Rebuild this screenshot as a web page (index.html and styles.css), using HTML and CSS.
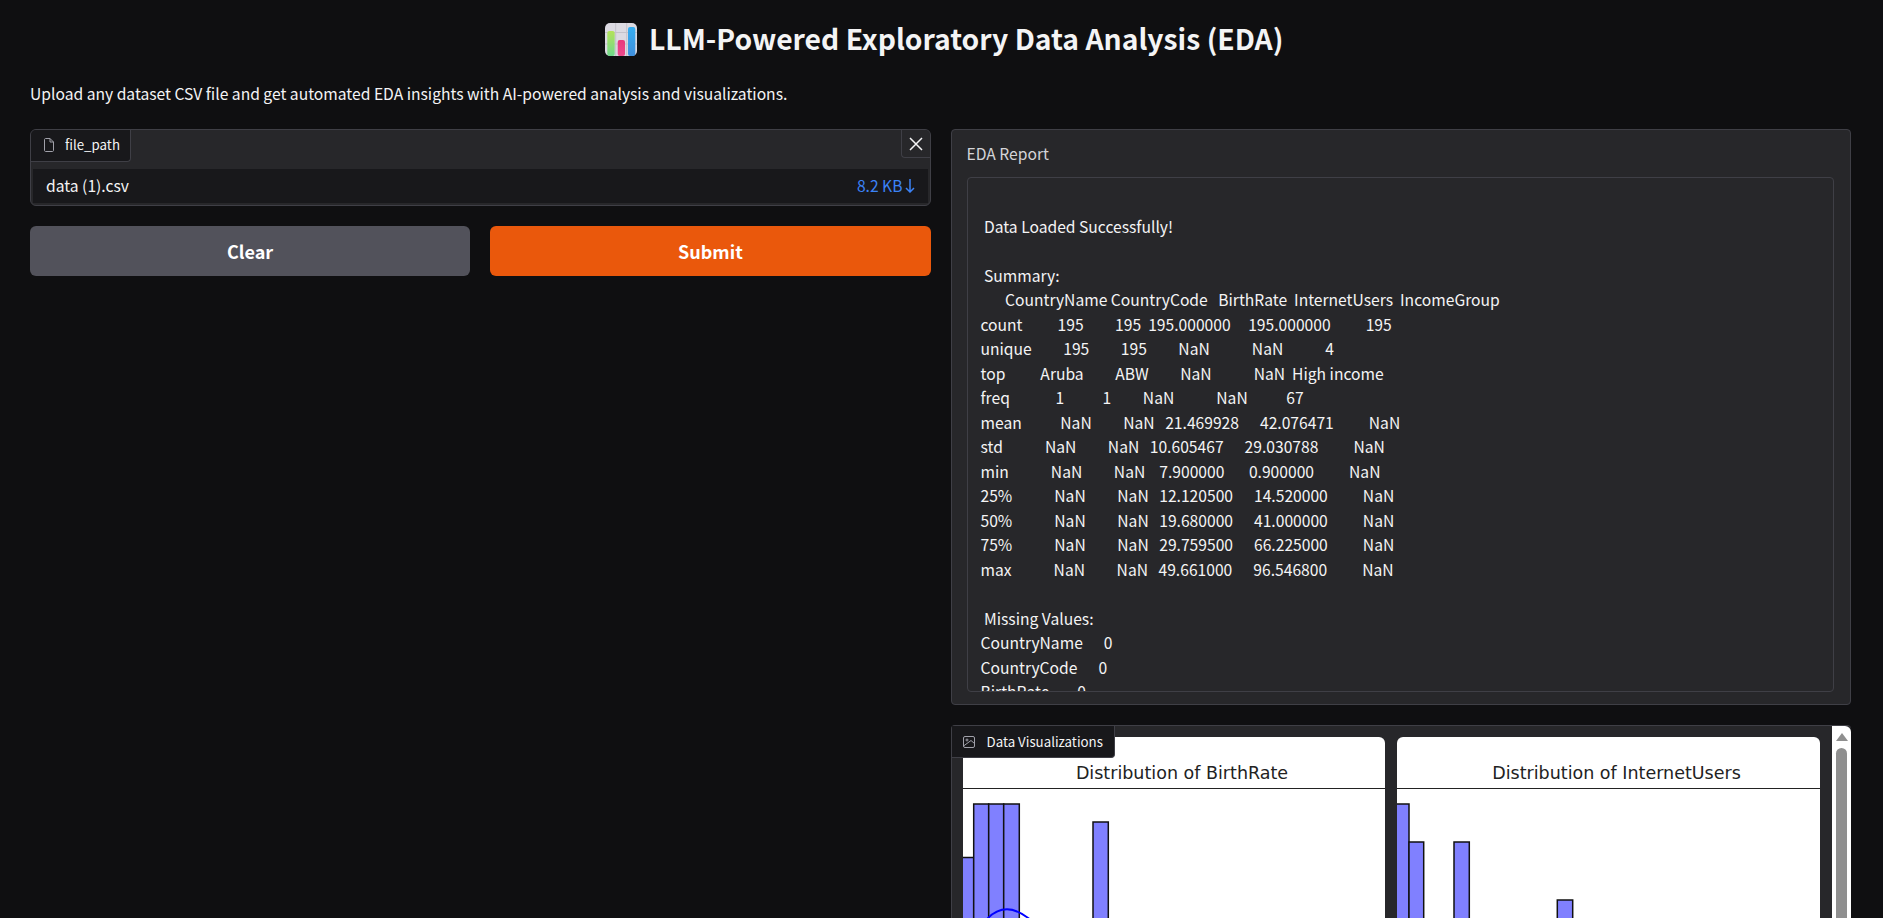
FILE: index.html
```html
<!DOCTYPE html>
<html lang="en">
  <head>
    <meta charset="UTF-8" />
    <meta name="viewport" content="width=device-width, initial-scale=1.0" />
    <title>LLM-Powered Exploratory Data Analysis (EDA)</title>
    <link rel="stylesheet" href="styles.css">
  </head>

  <body>
    <h1 class="page-title">
      <svg class="title-icon" width="32" height="33" viewBox="0 0 32 33">
        <defs>
          <linearGradient id="greenBar" x1="0" y1="0" x2="0" y2="1">
            <stop offset="0" stop-color="#b4e25a" />
            <stop offset="1" stop-color="#6fd88c" />
          </linearGradient>
          <linearGradient id="pinkBar" x1="0" y1="0" x2="0" y2="1">
            <stop offset="0" stop-color="#e8387c" />
            <stop offset="1" stop-color="#ec4a8c" />
          </linearGradient>
          <linearGradient id="blueBar" x1="0" y1="0" x2="0" y2="1">
            <stop offset="0" stop-color="#35aef2" />
            <stop offset="1" stop-color="#3f8fde" />
          </linearGradient>
        </defs>
        <rect width="32" height="33" rx="5" fill="#dcdae2" />
        <path d="M10.7 0V33M21.700 0V33M0 9.500H32M0 21H32" stroke="#c4c2cb" stroke-width="1" fill="none" />
        <rect x="2.300" y="8" width="7.400" height="25" rx="2" fill="url(#greenBar)" />
        <rect x="12.700" y="17" width="7.300" height="16" rx="2" fill="url(#pinkBar)" />
        <rect x="23" y="4" width="7.300" height="29" rx="2" fill="url(#blueBar)" />
      </svg>
      LLM-Powered Exploratory Data Analysis (EDA)
    </h1>
    <p class="page-desc">Upload any dataset CSV file and get automated EDA insights with AI-powered analysis and visualizations.</p>

    <div class="columns">
      <div class="col">
        <div class="file-block">
          <div class="tab-label file-label">
            <svg width="12" height="14" viewBox="0 0 12 14" fill="none" stroke="#a1a1aa" stroke-width="1">
              <path d="M1.500 1.500C1.500 1 2 .5 2.500 .5H7L10.500 4V12.500C10.500 13 10 13.500 9.500 13.500H2.500C2 13.500 1.500 13 1.500 12.500Z" />
              <path d="M7 .5V4H10.500" />
            </svg>
            file_path
          </div>
          <button type="button" class="close-btn">
            <svg width="16" height="16" viewBox="0 0 16 16" stroke="#f4f4f5" stroke-width="1.500" fill="none">
              <path d="M2 2L14 14M14 2L2 14" />
            </svg>
          </button>
          <div class="file-row">
            <span>data (1).csv</span>
            <span class="file-size">8.2 KB
              <svg width="10" height="14" viewBox="0 0 10 14" stroke="#3b82f6" stroke-width="1.500" fill="none">
                <path d="M5 0V13M1 9L5 13L9 9" />
              </svg>
            </span>
          </div>
        </div>
        <div class="btn-row">
          <button type="button" class="btn btn-clear">Clear</button>
          <button type="button" class="btn btn-submit">Submit</button>
        </div>
      </div>

      <div class="col">
        <div class="report">
          <div class="report-label">EDA Report</div>
          <pre class="report-text">

 Data Loaded Successfully!

 Summary:
       CountryName CountryCode   BirthRate  InternetUsers  IncomeGroup
count          195         195  195.000000     195.000000          195
unique         195         195         NaN            NaN            4
top          Aruba         ABW         NaN            NaN  High income
freq             1           1         NaN            NaN           67
mean           NaN         NaN   21.469928      42.076471          NaN
std            NaN         NaN   10.605467      29.030788          NaN
min            NaN         NaN    7.900000       0.900000          NaN
25%            NaN         NaN   12.120500      14.520000          NaN
50%            NaN         NaN   19.680000      41.000000          NaN
75%            NaN         NaN   29.759500      66.225000          NaN
max            NaN         NaN   49.661000      96.546800          NaN

 Missing Values:
CountryName      0
CountryCode      0
BirthRate        0
InternetUsers    0
IncomeGroup      0</pre>
        </div>

        <div class="gallery">
          <div class="tab-label gallery-label">
            <svg width="14" height="14" viewBox="0 0 14 14" fill="none" stroke="#a1a1aa" stroke-width="1">
              <rect x="1.500" y="1.500" width="11" height="11" rx="1.500" />
              <circle cx="5" cy="5" r="1" />
              <path d="M1.500 11L9 5.500L12.500 8.500" />
            </svg>
            Data Visualizations
          </div>
          <div class="plots">
            <div class="plot">
              <div class="plot-title">Distribution of BirthRate</div>
              <svg class="plot-svg" width="422" height="130" viewBox="0 0 422 130">
                <g class="bars">
                  <rect x="-5" y="68.500" width="15.700" height="70" />
                  <rect x="10.700" y="15" width="15" height="120" />
                  <rect x="25.700" y="15" width="15" height="120" />
                  <rect x="40.700" y="15" width="15.600" height="120" />
                  <rect x="130" y="33" width="15.300" height="100" />
                </g>
                <path class="curve" d="M20 135C28 124 36 120.300 44 120.300C52 120.300 60 124 70 133" />
              </svg>
            </div>
            <div class="plot">
              <div class="plot-title">Distribution of InternetUsers</div>
              <svg class="plot-svg" width="423" height="130" viewBox="0 0 423 130">
                <g class="bars">
                  <rect x="-5" y="15" width="17" height="120" />
                  <rect x="12" y="53" width="14.700" height="80" />
                  <rect x="57" y="53" width="15.300" height="80" />
                  <rect x="160.300" y="111" width="15.400" height="30" />
                </g>
              </svg>
            </div>
          </div>
          <div class="scrollbar">
            <div class="scroll-up"></div>
            <div class="scroll-thumb"></div>
          </div>
        </div>
      </div>
    </div>
  </body>
</html>
```

FILE: styles.css
```css
html,
body {
  height: 918px;
  overflow: hidden;
}

body {
  font-family: "Noto Sans CJK SC", "Noto Sans", sans-serif;
  font-size: 15.65px;
  padding: 0 32px 0 30px;
  margin: 0;
  background-color: #0f0f11;
  color: #f4f4f5;
}

.page-title {
  margin: 0;
  padding: 15px 0 0 7px;
  height: 48px;
  line-height: 46px;
  font-size: 28.3px;
  font-weight: 600;
  text-align: center;
}

.title-icon {
  vertical-align: -6px;
  margin-right: 6px;
}

.page-desc {
  margin: 0;
  padding-top: 19px;
  height: 47px;
  line-height: 24px;
}

.columns {
  display: grid;
  grid-template-columns: 1fr 1fr;
  gap: 20px;
  align-items: start;
}

.col {
  display: flex;
  flex-direction: column;
  min-width: 0;
}

.tab-label {
  display: flex;
  align-items: center;
  background-color: #18181b;
  border-right: 1px solid #3f3f46;
  border-bottom: 1px solid #3f3f46;
  border-radius: 0 0 4px 0;
  font-size: 13.3px;
  color: #f4f4f5;
  box-sizing: border-box;
}

/* file block */
.file-block {
  position: relative;
  height: 77px;
  box-sizing: border-box;
  border: 1px solid #3f3f46;
  border-radius: 6px;
  background-color: #27272a;
  padding-top: 39px;
}

.file-label {
  position: absolute;
  left: 0;
  top: 0;
  width: 100px;
  height: 32px;
  padding: 0 0 2px 12px;
  gap: 10px;
  border-radius: 5px 0 4px 0;
}

.close-btn {
  position: absolute;
  right: 0;
  top: 0;
  width: 29px;
  height: 28px;
  padding: 0;
  display: flex;
  align-items: center;
  justify-content: center;
  background-color: #27272a;
  border: none;
  border-left: 1px solid #3f3f46;
  border-bottom: 1px solid #3f3f46;
  border-radius: 0 5px 0 4px;
}

.file-row {
  display: flex;
  justify-content: space-between;
  align-items: center;
  height: 34px;
  margin: 0 2px;
  padding: 0 13px 1px 13px;
  box-sizing: border-box;
  background-color: #18181b;
}

.file-size {
  display: flex;
  align-items: center;
  gap: 2px;
  color: #3b82f6;
}

.btn-row {
  display: grid;
  grid-template-columns: 1fr 1fr;
  gap: 20px;
  margin-top: 20px;
}

.btn {
  height: 50px;
  border: none;
  border-radius: 6px;
  font-family: inherit;
  font-size: 18px;
  font-weight: 600;
  color: #fff;
}

.btn-clear {
  background-color: #52525b;
}

.btn-submit {
  background-color: #ea580c;
}

/* report */
.report {
  height: 576px;
  box-sizing: border-box;
  border: 1px solid #3f3f46;
  border-radius: 4px;
  background-color: #27272a;
  padding: 12px 16px 12px 15px;
  display: flex;
  flex-direction: column;
}

.report-label {
  height: 35px;
  line-height: 24px;
  color: #d4d4d8;
}

.report-text {
  flex: 1;
  min-height: 0;
  overflow: hidden;
  margin: 0;
  padding: 12px 12px 0 13px;
  border: 1px solid #3f3f46;
  border-radius: 4px;
  font-family: inherit;
  font-size: 15.65px;
  line-height: 24.5px;
  color: #f4f4f5;
}

/* gallery */
.gallery {
  position: relative;
  display: flex;
  margin-top: 20px;
  height: 600px;
  border: 1px solid #3f3f46;
  border-right: none;
  border-radius: 4px;
  background-color: #27272a;
}

.gallery-label {
  position: absolute;
  left: 0;
  top: 0;
  width: 163px;
  height: 32px;
  padding-left: 10px;
  gap: 11px;
  z-index: 1;
}

.plots {
  flex: 1;
  display: grid;
  grid-template-columns: 422px 423px;
  gap: 12px;
  padding: 11px 0 0 11px;
  align-content: start;
}

.plot {
  height: 400px;
  background-color: #fff;
  border-radius: 6px;
  overflow: hidden;
}

.plot-title {
  height: 51px;
  line-height: 72px;
  padding-left: 17px;
  border-bottom: 1px solid #222;
  font-family: "DejaVu Sans", sans-serif;
  font-size: 17.5px;
  text-align: center;
  color: #222;
}

.plot-svg {
  display: block;
}

.bars rect {
  fill: #8080ff;
  stroke: #111;
  stroke-width: 1.5;
}

.curve {
  fill: none;
  stroke: #0000ff;
  stroke-width: 2;
}

.scrollbar {
  width: 19px;
  background-color: #fff;
  border-radius: 0 6px 0 0;
  display: flex;
  flex-direction: column;
  align-items: center;
  padding-top: 7px;
  box-sizing: border-box;
  gap: 7px;
}

.scroll-up {
  width: 0;
  height: 0;
  border-left: 6px solid transparent;
  border-right: 6px solid transparent;
  border-bottom: 8px solid #8f8f8f;
}

.scroll-thumb {
  width: 11px;
  height: 400px;
  border-radius: 6px;
  background-color: #8f8f8f;
}
```
